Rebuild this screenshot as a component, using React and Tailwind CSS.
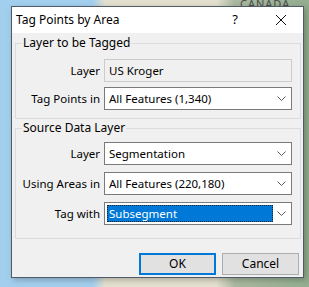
import React from "react";

const font = { fontFamily: '"Noto Sans", "Segoe UI", sans-serif' };

const Chevron = () => (
  <svg width="9" height="5" viewBox="0 0 9 5" className="shrink-0">
    <path d="M0.5 0.5 L4.5 4.5 L8.5 0.5" fill="none" stroke="#5a5a5a" strokeWidth="1" />
  </svg>
);

const Row = ({ label, children, className = "" }) => (
  <div className={`flex h-[23px] items-center ${className}`}>
    <div className="w-[88px] whitespace-nowrap pr-[4px] text-right text-black">{label}</div>
    {children}
  </div>
);

const Select = ({ value, selected }) => (
  <div className="flex h-[23px] w-[188px] items-center border border-[#7a7a7a] bg-white pl-[2px] pr-[5px]">
    {selected ? (
      <div className="flex h-[17px] w-[166px] items-center border border-dotted border-[#222] bg-[#0078d7] pl-[1px] leading-none text-white">
        {value}
      </div>
    ) : (
      <div className="flex-1 pl-[2px] text-black">{value}</div>
    )}
    <div className="ml-auto">
      <Chevron />
    </div>
  </div>
);

export default function App() {
  return (
    <div
      className="relative h-[287px] w-[309px] overflow-hidden bg-[linear-gradient(90deg,#a3cfee_0%,#a3cfee_30%,#e4e0cf_34%,#e4e0cf_70%,#a9b8a0_76%,#93ad8f_100%)] pl-[11px] pt-[6px] text-[11.5px]"
      style={font}
    >
      <div className="absolute left-[240px] top-[-2px] text-[11px] leading-[12px] tracking-[1px] text-[#4a4a4a]">CANADA</div>
      <div className="relative flex h-[272px] w-[293px] flex-col border border-[#4f5b66] bg-[#f0f0f0] shadow-[2px_2px_6px_rgba(0,0,0,0.25)]">
        {/* Title bar */}
        <div className="flex h-[26px] items-center bg-white pl-[4px] text-[12px]">
          <span className="text-black">Tag Points by Area</span>
          <span className="ml-auto mr-[38px] text-[13px] text-black">?</span>
          <svg width="10" height="10" viewBox="0 0 10 10" className="mr-[17px]">
            <path d="M0 0 L10 10 M10 0 L0 10" stroke="#111" strokeWidth="1" />
          </svg>
        </div>

        <div className="flex flex-col pl-[3px] pr-[2px] pt-[2px]">
          {/* Group 1 */}
          <fieldset className="h-[84px] w-[286px] border border-[#dcdcdc] pl-0 pr-[6px]">
            <legend className="ml-[6px] px-[1px] text-[12px] leading-[16px] text-black">Layer to be Tagged</legend>
            <Row label="Layer" className="mt-[8px]">
              <div className="flex h-[23px] w-[188px] items-center border border-[#cccccc] bg-[#f0f0f0] pl-[4px] text-black">
                US Kroger
              </div>
            </Row>
            <Row label="Tag Points in" className="mt-[5px]">
              <Select value="All Features (1,340)" />
            </Row>
          </fieldset>

          {/* Group 2 */}
          <fieldset className="mt-[1px] h-[119px] w-[286px] border border-[#dcdcdc] pl-0 pr-[6px]">
            <legend className="ml-[6px] px-[1px] text-[12px] leading-[16px] text-black">Source Data Layer</legend>
            <Row label="Layer" className="mt-[6px]">
              <Select value="Segmentation" />
            </Row>
            <Row label="Using Areas in" className="mt-[7px]">
              <Select value="All Features (220,180)" />
            </Row>
            <Row label="Tag with" className="mt-[7px]">
              <Select value="Subsegment" selected />
            </Row>
          </fieldset>

          {/* Buttons */}
          <div className="mt-[14px] flex justify-end gap-[6px] pr-[2px]">
            <button className="flex h-[22px] w-[77px] items-center justify-center border-2 border-[#0078d7] bg-[#e1e1e1] text-[12px] text-black">
              OK
            </button>
            <button className="flex h-[22px] w-[77px] items-center justify-center border border-[#adadad] bg-[#e1e1e1] text-[12px] text-black">
              Cancel
            </button>
          </div>
        </div>
      </div>
    </div>
  );
}
